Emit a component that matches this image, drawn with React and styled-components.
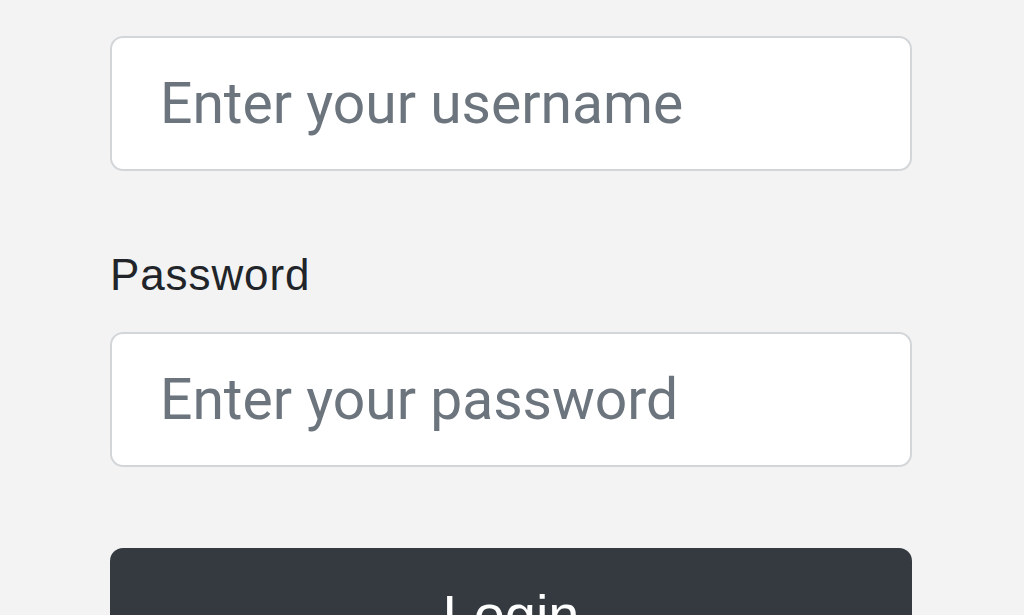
import React from 'react';
import styled, { createGlobalStyle } from 'styled-components';

const GlobalStyle = createGlobalStyle`
    html, body {
        margin: 0;
        padding: 0;
        background: #f3f3f3;
        overflow: hidden;
    }
`;

const App = () => {
    return (
        <>
            <GlobalStyle />
            <Page>
                <Form onSubmit={(e) => e.preventDefault()}>
                    <Field>
                        <Input type="text" placeholder="Enter your username" />
                    </Field>
                    <Field>
                        <Label htmlFor="password">Password</Label>
                        <Input id="password" type="password" placeholder="Enter your password" />
                    </Field>
                    <SubmitButton type="submit">Login</SubmitButton>
                </Form>
            </Page>
        </>
    );
};

export default App;

const Page = styled.div`
    height: 615px;
    overflow: hidden;
    background: #f3f3f3;
`;

const Form = styled.form`
    display: flex;
    flex-direction: column;
    width: 802px;
    margin-left: 110px;
    padding-top: 36px;
`;

const Field = styled.div`
    display: flex;
    flex-direction: column;
    margin-bottom: 78px;

    &:last-of-type {
        margin-bottom: 81px;
    }
`;

const Label = styled.label`
    font-family: "Liberation Sans", Arial, sans-serif;
    font-size: 44px;
    line-height: 1.2;
    color: #212529;
    margin-bottom: 30px;
    letter-spacing: 0.9px;
`;

const Input = styled.input`
    box-sizing: border-box;
    height: 135px;
    width: 100%;
    padding: 0 46px 0 48px;
    border: 2px solid #d3d6d9;
    border-radius: 13px;
    background: #ffffff;
    font-family: Roboto, "Noto Sans", sans-serif;
    font-size: 57px;
    color: #212529;
    outline: none;

    &::placeholder {
        color: #6c757d;
        opacity: 1;
    }
`;

const SubmitButton = styled.button`
    box-sizing: border-box;
    height: 134px;
    width: 100%;
    border: none;
    border-radius: 13px;
    background: #343a40;
    color: #ffffff;
    font-family: "Liberation Sans", Arial, sans-serif;
    font-size: 56px;
    cursor: pointer;
`;
